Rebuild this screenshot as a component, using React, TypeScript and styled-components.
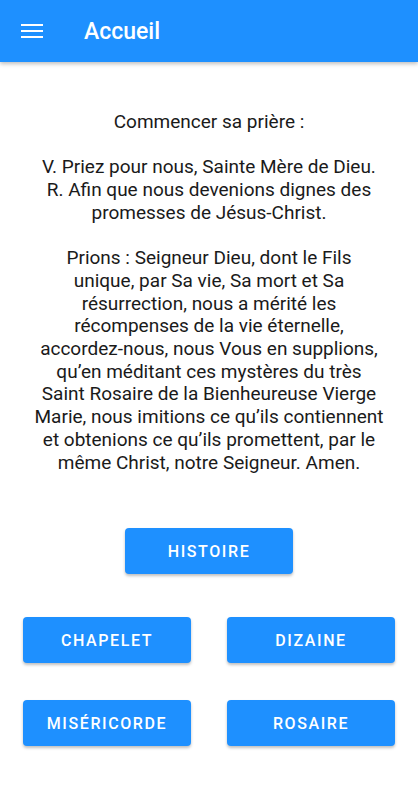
import React from "react";
import styled, { createGlobalStyle } from "styled-components";

const Global = createGlobalStyle`
  html, body { margin: 0; padding: 0; background: #fff; }
  body { font-family: Roboto, "Noto Sans", sans-serif; }
`;

const Page = styled.div`
  width: 418px;
  min-height: 800px;
  display: flex;
  flex-direction: column;
  background: #fff;
`;

const AppBar = styled.header`
  height: 62px;
  background: #1e90ff;
  display: flex;
  align-items: center;
  padding-left: 21px;
  box-shadow: 0 2px 4px rgba(0, 0, 0, 0.25);
`;

const MenuIcon = styled.div`
  width: 22px;
  display: flex;
  flex-direction: column;
  gap: 4px;
  span {
    display: block;
    height: 2px;
    background: #fff;
  }
`;

const Title = styled.h1`
  margin: 0 0 0 41px;
  font-size: 23px;
  font-weight: 500;
  color: #fff;
  font-family: Roboto, sans-serif;
`;

const Content = styled.main`
  display: flex;
  flex-direction: column;
  align-items: center;
  padding: 49px 0 0;
`;

const Prayer = styled.p`
  margin: 0;
  text-align: center;
  font-size: 19px;
  line-height: 22.7px;
  color: #1a1a1a;
  font-family: Roboto, sans-serif;
  white-space: nowrap;
`;

const Blank = styled.span`
  display: block;
  height: 22.7px;
`;

const ButtonGrid = styled.div`
  margin-top: 54px;
  width: 372px;
  display: grid;
  grid-template-columns: 168px 168px;
  justify-content: space-between;
  row-gap: 37px;
`;

const Button = styled.button<{ $wide?: boolean }>`
  grid-column: ${(p) => (p.$wide ? "1 / -1" : "auto")};
  justify-self: center;
  width: 168px;
  height: 46px;
  border: none;
  border-radius: 4px;
  background: #1e90ff;
  color: #fff;
  font-family: Roboto, sans-serif;
  font-weight: 500;
  font-size: 16px;
  letter-spacing: 1.6px;
  text-transform: uppercase;
  box-shadow: 0 2px 3px rgba(0, 0, 0, 0.25);
  margin-bottom: ${(p) => (p.$wide ? "6px" : "0")};
`;

export default function App() {
  return (
    <Page>
      <Global />
      <AppBar>
        <MenuIcon>
          <span />
          <span />
          <span />
        </MenuIcon>
        <Title>Accueil</Title>
      </AppBar>
      <Content>
        <Prayer>
          Commencer sa prière :
          <Blank />
          V. Priez pour nous, Sainte Mère de Dieu.
          <br />
          R. Afin que nous devenions dignes des
          <br />
          promesses de Jésus-Christ.
          <Blank />
          Prions : Seigneur Dieu, dont le Fils
          <br />
          unique, par Sa vie, Sa mort et Sa
          <br />
          résurrection, nous a mérité les
          <br />
          récompenses de la vie éternelle,
          <br />
          accordez-nous, nous Vous en supplions,
          <br />
          qu’en méditant ces mystères du très
          <br />
          Saint Rosaire de la Bienheureuse Vierge
          <br />
          Marie, nous imitions ce qu’ils contiennent
          <br />
          et obtenions ce qu’ils promettent, par le
          <br />
          même Christ, notre Seigneur. Amen.
        </Prayer>
        <ButtonGrid>
          <Button $wide>Histoire</Button>
          <Button>Chapelet</Button>
          <Button>Dizaine</Button>
          <Button>Miséricorde</Button>
          <Button>Rosaire</Button>
        </ButtonGrid>
      </Content>
    </Page>
  );
}
